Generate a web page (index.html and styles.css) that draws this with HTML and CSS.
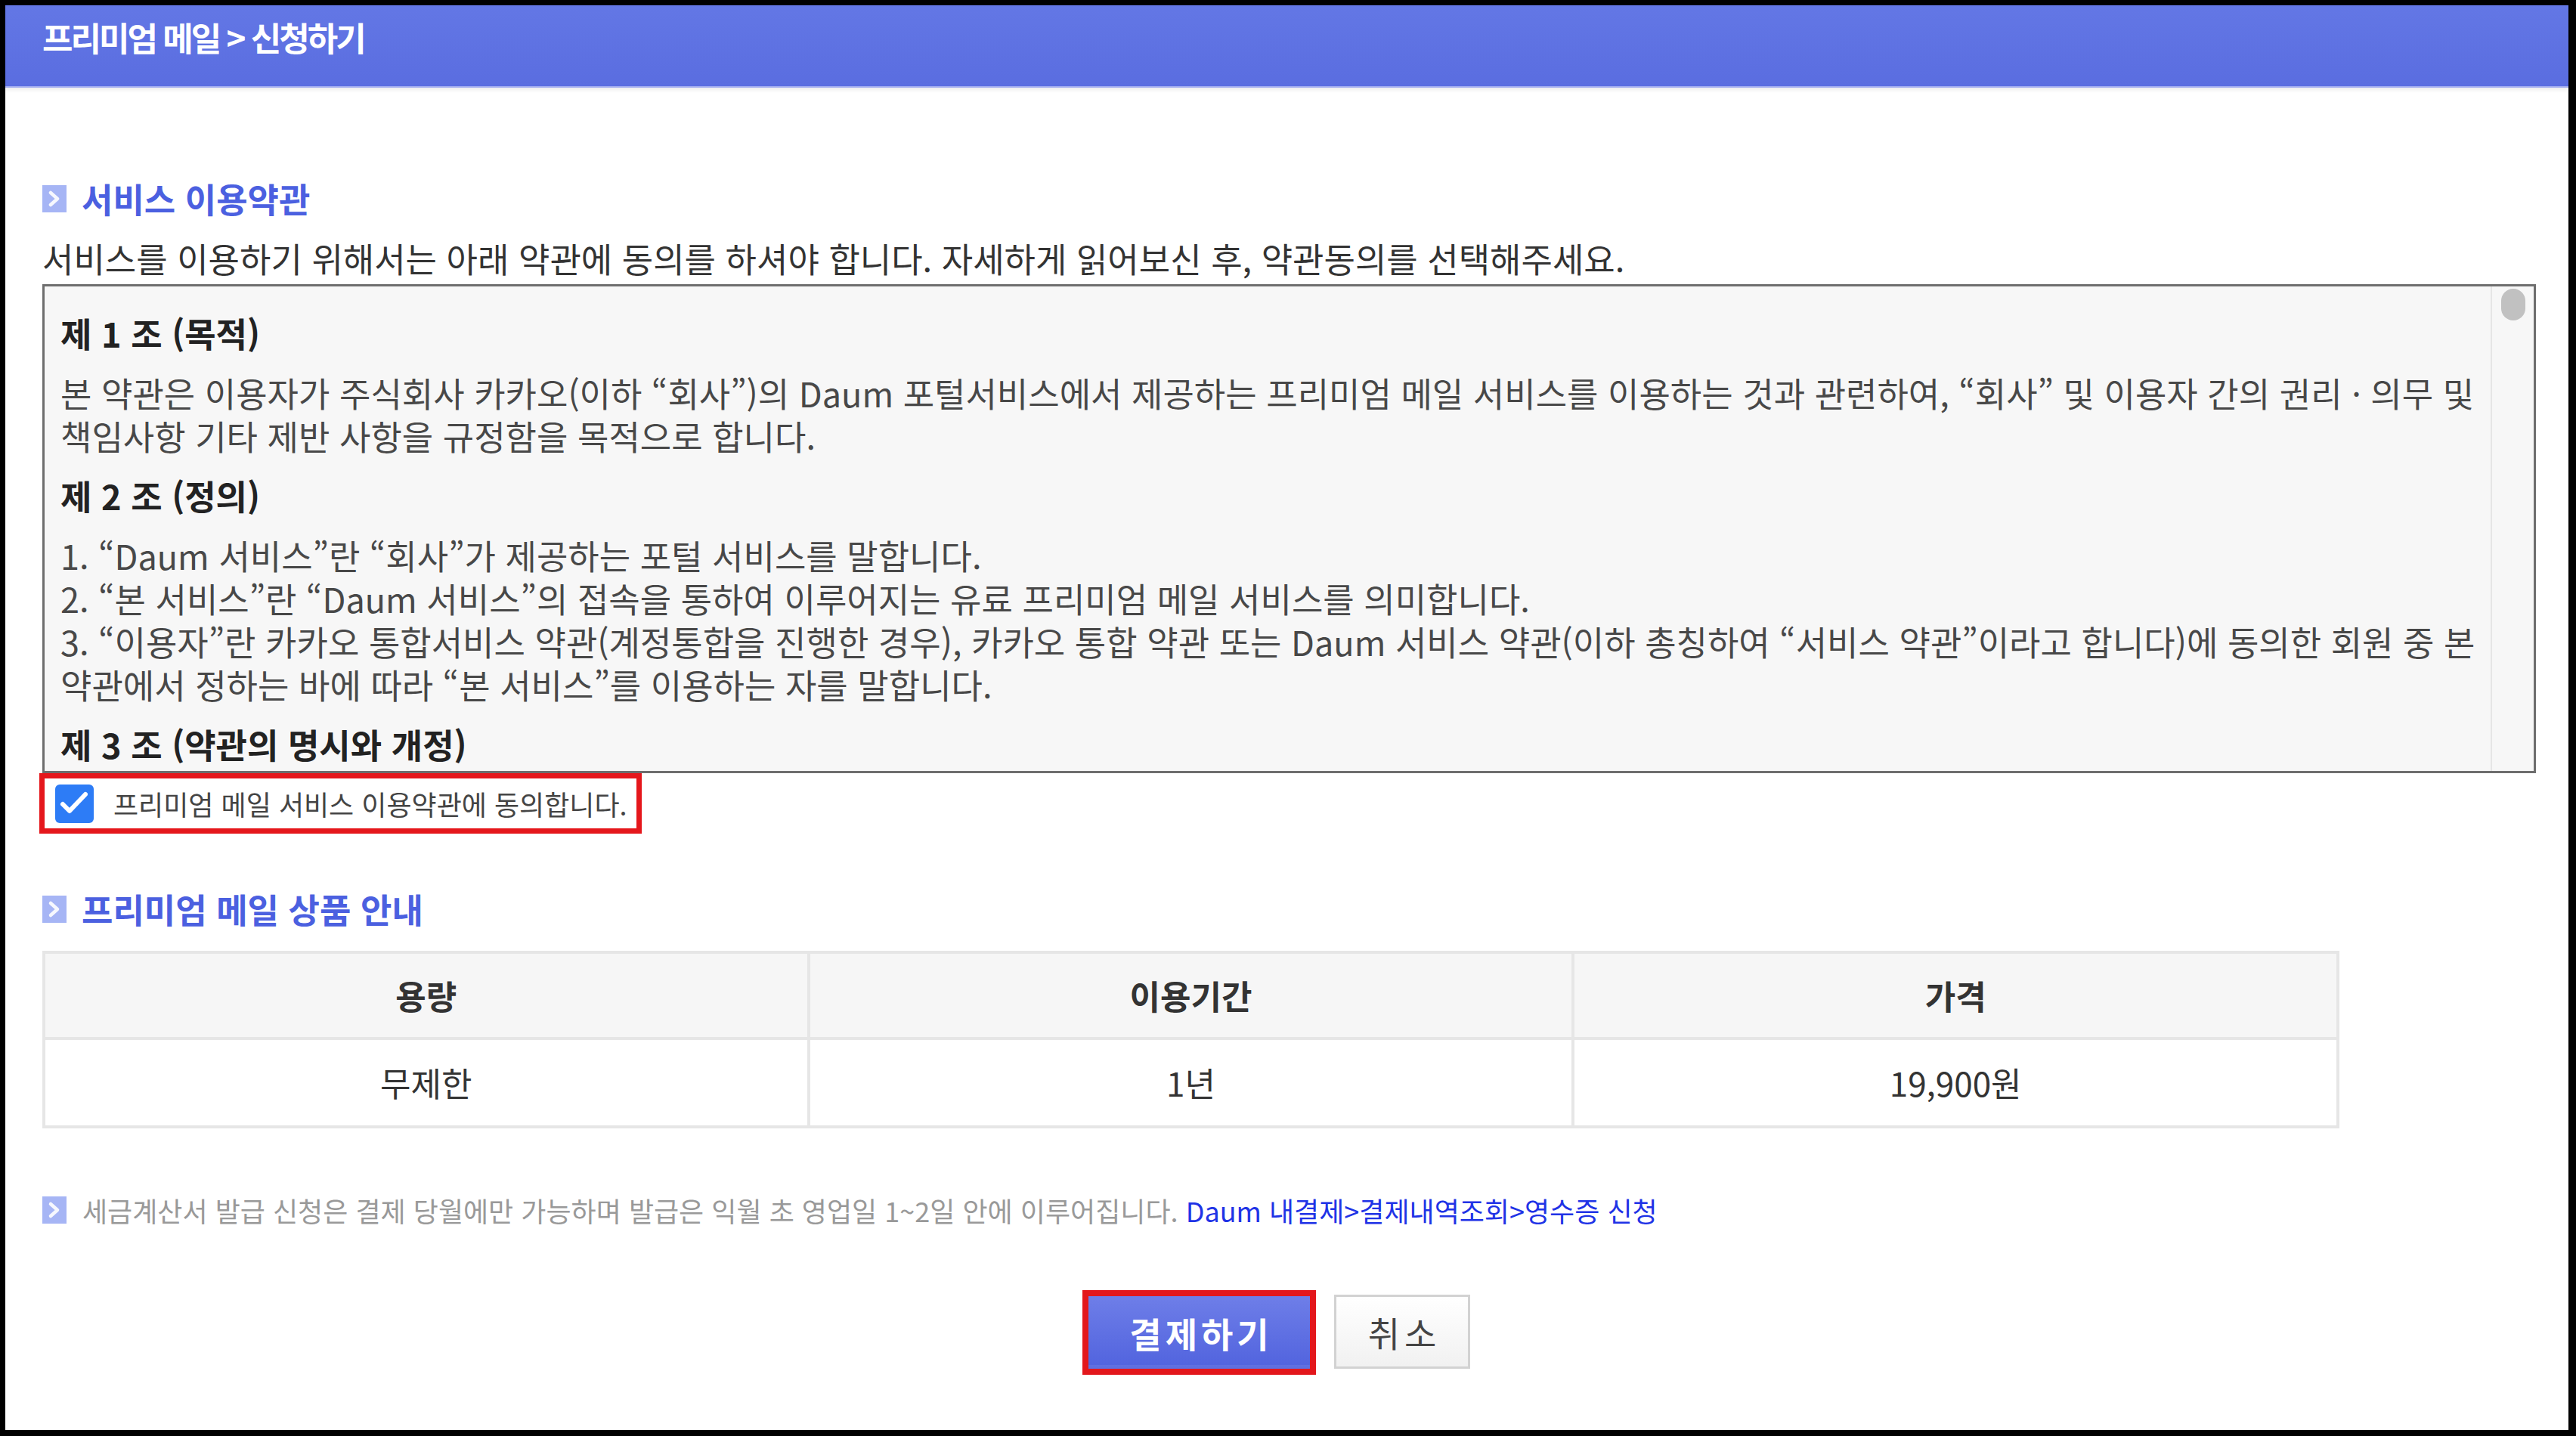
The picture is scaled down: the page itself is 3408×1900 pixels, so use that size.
FILE: index.html
```html
<!DOCTYPE html>
<html lang="ko">
<head>
  <meta charset="UTF-8">
  <meta name="viewport" content="width=device-width, initial-scale=1.0">
  <title>프리미엄 메일 신청하기</title>
  <link rel="stylesheet" href="styles.css">
</head>
<body>
  <div class="page">
    <div class="page-header">프리미엄 메일 &gt; 신청하기</div>

    <div class="content">
      <h3 class="section-title">
        <svg class="bullet" viewBox="0 0 32 36"><rect width="32" height="36" fill="#a6b5f5"/><polyline points="11,10 20,18 11,26" fill="none" stroke="#fff" stroke-width="4.5" stroke-linecap="round" stroke-linejoin="round" opacity="0.9"/></svg>
        서비스 이용약관
      </h3>
      <p class="desc">서비스를 이용하기 위해서는 아래 약관에 동의를 하셔야 합니다. 자세하게 읽어보신 후, 약관동의를 선택해주세요.</p>

      <div class="terms">
        <div class="terms-body">
          <h4>제 1 조 (목적)</h4>
          <p>본 약관은 이용자가 주식회사 카카오(이하 “회사”)의 Daum 포털서비스에서 제공하는 프리미엄 메일 서비스를 이용하는 것과 관련하여, “회사” 및 이용자 간의 권리 · 의무 및 책임사항 기타 제반 사항을 규정함을 목적으로 합니다.</p>
          <h4>제 2 조 (정의)</h4>
          <p class="list">1. “Daum 서비스”란 “회사”가 제공하는 포털 서비스를 말합니다.
          2. “본 서비스”란 “Daum 서비스”의 접속을 통하여 이루어지는 유료 프리미엄 메일 서비스를 의미합니다.
          3. “이용자”란 카카오 통합서비스 약관(계정통합을 진행한 경우), 카카오 통합 약관 또는 Daum 서비스 약관(이하 총칭하여 “서비스 약관”이라고 합니다)에 동의한 회원 중 본 약관에서 정하는 바에 따라 “본 서비스”를 이용하는 자를 말합니다.</p>
          <h4>제 3 조 (약관의 명시와 개정)</h4>
        </div>
        <div class="scroll-track"><div class="scroll-thumb"></div></div>
      </div>

      <label class="agree">
        <svg class="check" viewBox="0 0 51 51"><rect width="51" height="51" rx="6" fill="#2d7cf6"/><polyline points="10,26 19,35 40,13" fill="none" stroke="#fff" stroke-width="6" stroke-linecap="round" stroke-linejoin="round"/></svg>
        <span>프리미엄 메일 서비스 이용약관에 동의합니다.</span>
      </label>

      <h3 class="section-title section-title--product">
        <svg class="bullet" viewBox="0 0 32 36"><rect width="32" height="36" fill="#a6b5f5"/><polyline points="11,10 20,18 11,26" fill="none" stroke="#fff" stroke-width="4.5" stroke-linecap="round" stroke-linejoin="round" opacity="0.9"/></svg>
        프리미엄 메일 상품 안내
      </h3>

      <table class="price">
        <thead>
          <tr><th>용량</th><th>이용기간</th><th>가격</th></tr>
        </thead>
        <tbody>
          <tr><td>무제한</td><td>1년</td><td>19,900원</td></tr>
        </tbody>
      </table>

      <p class="notice">
        <svg class="bullet" viewBox="0 0 32 36"><rect width="32" height="36" fill="#a6b5f5"/><polyline points="11,10 20,18 11,26" fill="none" stroke="#fff" stroke-width="4.5" stroke-linecap="round" stroke-linejoin="round" opacity="0.9"/></svg>
        <span>세금계산서 발급 신청은 결제 당월에만 가능하며 발급은 익월 초 영업일 1~2일 안에 이루어집니다. <a href="#">Daum 내결제&gt;결제내역조회&gt;영수증 신청</a></span>
      </p>

      <div class="buttons">
        <button class="btn btn-pay">결제하기</button>
        <button class="btn btn-cancel">취소</button>
      </div>
    </div>
  </div>
</body>
</html>
```

FILE: styles.css
```css
html, body{
  height: 100%;
  margin: 0;
}
body{
  box-sizing: border-box;
  padding: 7px 10px 8px 7px;
  background: #000;
  font-family: "Noto Sans CJK KR", "Noto Sans", sans-serif;
  color: #333;
}
.page{
  height: 100%;
  background: #fff;
  overflow: hidden;
}

.page-header{
  height: 107px;
  padding-left: 49px;
  line-height: 84px;
  font-size: 44px;
  font-weight: 700;
  letter-spacing: -3px;
  color: #fff;
  background: linear-gradient(#6377e5, #5a6de0);
  border-bottom: 2px solid #a3adf1;
  box-shadow: 0 3px 5px rgba(0, 0, 0, 0.08);
}

.content{
  padding: 0 43px 0 49px;
}

.bullet{
  flex: none;
  width: 32px;
  height: 36px;
}

.section-title{
  display: flex;
  align-items: center;
  gap: 20px;
  margin: 119px 0 0;
  font-size: 45px;
  line-height: 56px;
  font-weight: 700;
  color: #4b60e0;
}
.section-title--product{
  margin-top: 72px;
}

.desc{
  margin: 23px 0 0;
  font-size: 45px;
  line-height: 56px;
  color: #333;
}

/* 약관 박스 */
.terms{
  display: flex;
  height: 647px;
  box-sizing: border-box;
  margin-top: 6px;
  border: 3px solid #6e6e6e;
  background: #f7f7f7;
}
.terms-body{
  flex: 1;
  overflow: hidden;
  padding: 11px 10px 0 21px;
  font-size: 45px;
  line-height: 57px;
  color: #484848;
}
.terms-body h4{
  margin: 22px 0;
  font-size: 45px;
  font-weight: 700;
  color: #222;
}
.terms-body p{
  margin: 0;
}
.terms-body .list{
  white-space: pre-line;
}
.scroll-track{
  flex: none;
  width: 55px;
  padding-top: 3px;
  border-left: 2px solid #e6e6e6;
}
.scroll-thumb{
  width: 32px;
  height: 42px;
  margin: 0 auto;
  border-radius: 16px;
  background: #c1c1c1;
}

.agree{
  display: inline-flex;
  align-items: center;
  gap: 26px;
  margin-left: -4px;
  padding: 7px 12px 7px 14px;
  border: 7px solid #e5171c;
  font-size: 36px;
  line-height: 52px;
  color: #444;
}
.check{
  flex: none;
  width: 51px;
  height: 51px;
}

/* 상품 테이블 */
.price{
  width: 3039px;
  margin-top: 27px;
  table-layout: fixed;
  border-spacing: 0;
  border-top: 4px solid #e6e6e6;
  border-left: 4px solid #e6e6e6;
  font-size: 44px;
  color: #333;
}
.price th, .price td{
  padding: 0;
  text-align: center;
  border-right: 4px solid #e6e6e6;
  border-bottom: 4px solid #e6e6e6;
}
.price th{
  line-height: 110px;
  font-weight: 700;
  background: #f6f6f6;
}
.price td{
  line-height: 113px;
}

.notice{
  display: flex;
  align-items: center;
  gap: 21px;
  margin: 82px 0 0;
  font-size: 36px;
  line-height: 52px;
  color: #999;
}
.notice a{
  color: #1f33e6;
  text-decoration: none;
}

.buttons{
  display: flex;
  justify-content: center;
  align-items: flex-end;
  gap: 32px;
  margin-top: 86px;
  padding-right: 26px;
}
.btn{
  font-family: inherit;
  font-size: 46px;
  padding: 0;
  cursor: pointer;
}
.btn-pay{
  width: 293px;
  height: 96px;
  border: 0;
  outline: 8px solid #e3171c;
  font-weight: 700;
  letter-spacing: 5px;
  text-indent: 5px;
  color: #fff;
  background: linear-gradient(#6e7ee8, #5163de);
  box-shadow: inset 0 -5px 0 rgba(255, 255, 255, 0.08);
}
.btn-cancel{
  width: 180px;
  height: 98px;
  border: 3px solid #d2d2d2;
  letter-spacing: 6px;
  text-indent: 6px;
  color: #444;
  background: linear-gradient(#fff, #f1f1f1);
}
```
